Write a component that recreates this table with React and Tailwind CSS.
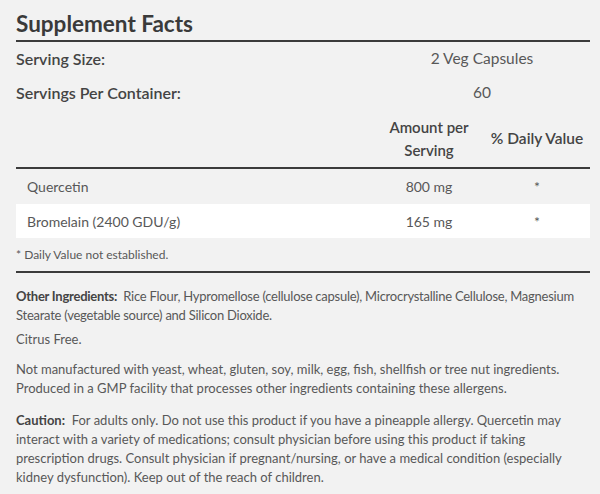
const servingRows = [
  { label: 'Serving Size:', value: '2 Veg Capsules' },
  { label: 'Servings Per Container:', value: '60' },
]

const ingredients = [
  { name: 'Quercetin', amount: '800 mg', dv: '*', rowClass: 'h-[35px]' },
  { name: 'Bromelain (2400 GDU/g)', amount: '165 mg', dv: '*', rowClass: 'h-[34px] bg-white' },
]

export default function App() {
  return (
    <div className="min-h-[494px] w-[600px] bg-[#f2f2f2] pl-4 pr-[10px] pt-[10px] font-['Lato',sans-serif] text-[#585858]">
      <h2 className="border-b-2 border-[#3c3c3c] pb-[2px] text-[22.5px] font-bold leading-[28px] text-[#3a3a3a]">
        Supplement Facts
      </h2>

      {servingRows.map((row) => (
        <div key={row.label} className="flex h-[34px] items-center">
          <div className="flex-1 text-[16px] font-semibold text-[#444]">{row.label}</div>
          <div className="w-[216px] text-center text-[15.5px]">{row.value}</div>
        </div>
      ))}

      <div className="flex h-[59px] items-center border-b-2 border-[#3c3c3c] font-semibold text-[#444]">
        <div className="flex-1" />
        <div className="w-[110px] text-center text-[15px] leading-[23px]">
          Amount per
          <br />
          Serving
        </div>
        <div className="w-[106px] text-center text-[15.5px]">% Daily Value</div>
      </div>

      {ingredients.map((item) => (
        <div key={item.name} className={`flex items-center text-[14px] ${item.rowClass}`}>
          <div className="flex-1 pl-[11px]">{item.name}</div>
          <div className="w-[110px] text-center">{item.amount}</div>
          <div className="w-[106px] text-center">{item.dv}</div>
        </div>
      ))}

      <div className="flex h-[35px] items-center border-b-2 border-[#3c3c3c] text-[12px]">
        * Daily Value not established.
      </div>

      <div className="pt-[14px] text-[13px] leading-[19px]">
        <p className="-mr-[4px] tracking-[-0.25px]">
          <span className="font-bold text-[#444]">Other Ingredients:</span>&nbsp; Rice Flour, Hypromellose
          (cellulose capsule), Microcrystalline Cellulose, Magnesium Stearate (vegetable source) and Silicon
          Dioxide.
        </p>
        <p className="mt-[5px]">Citrus Free.</p>
        <p className="mt-[11px]">
          Not manufactured with yeast, wheat, gluten, soy, milk, egg, fish, shellfish or tree nut ingredients.
          Produced in a GMP facility that processes other ingredients containing these allergens.
        </p>
        <p className="mt-[13px]">
          <span className="font-bold text-[#444]">Caution:</span>&nbsp; For adults only. Do not use this product
          if you have a pineapple allergy. Quercetin may interact with a variety of medications; consult physician
          before using this product if taking prescription drugs. Consult physician if pregnant/nursing, or have a
          medical condition (especially kidney dysfunction). Keep out of the reach of children.
        </p>
      </div>
    </div>
  )
}
